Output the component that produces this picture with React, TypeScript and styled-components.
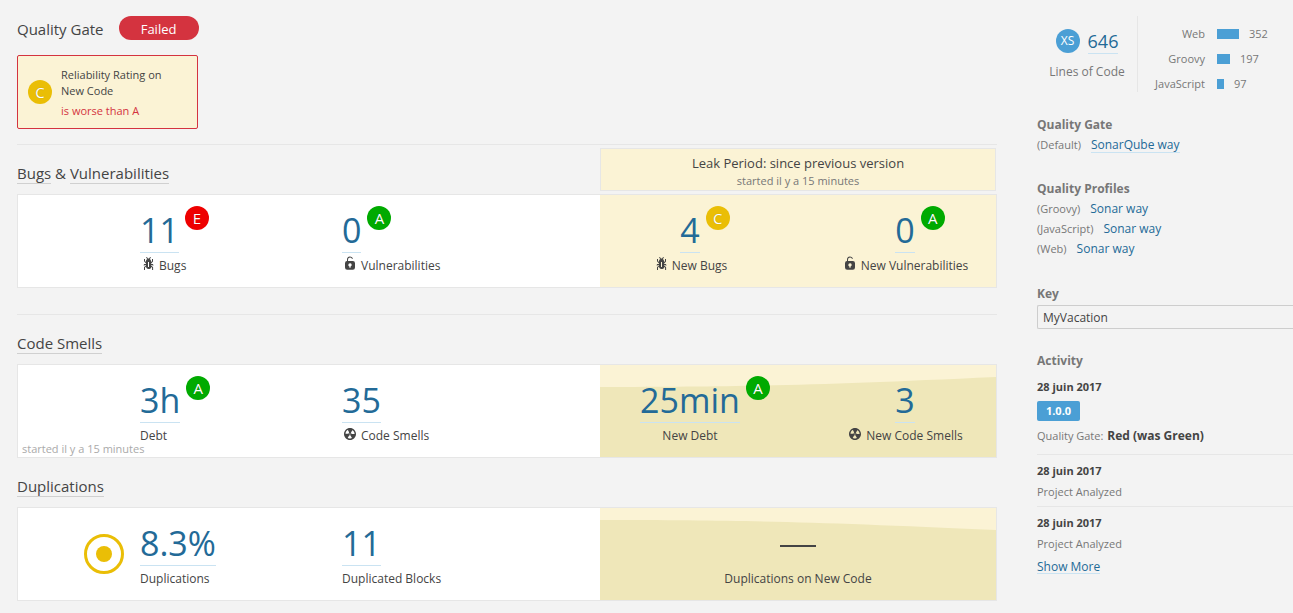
import React from 'react';
import styled, { createGlobalStyle } from 'styled-components';

const ink = '#444';
const muted = '#777';
const linkBlue = '#236a97';
const linkLine = '#cae3f2';
const line = '#e6e6e6';
const leak = '#fbf3d5';
const leakDeep = '#efe7b9';
const brand = '#4b9fd5';
const red = '#d4333f';

const ratingColors = { A: '#00aa00', C: '#eabe06', E: '#ee0000' };
type Rating = keyof typeof ratingColors;

const GlobalStyle = createGlobalStyle`
  *, *::before, *::after { box-sizing: border-box; }
  body {
    margin: 0;
    background: #f3f3f3;
    color: ${ink};
    font-family: "Open Sans", "Noto Sans", sans-serif;
    font-size: 12px;
    line-height: 20px;
  }
  h2, h3, p, ul, dl, dd { margin: 0; padding: 0; }
  ul { list-style: none; }
`;

const Page = styled.div`
  display: grid;
  grid-template-columns: minmax(0, 1fr) 256px;
  column-gap: 40px;
  padding: 16px 0 12px 17px;
`;

const Main = styled.main`
  display: flex;
  flex-direction: column;
`;

const Title = styled.h2`
  font-size: 15px;
  font-weight: 400;
  line-height: 20px;
`;

const GateHeader = styled.header`
  display: flex;
  align-items: center;
  gap: 15px;
  height: 24px;
  & > ${Title} { padding-top: 2px; }
`;

const TitleLink = styled.a`
  display: inline-block;
  color: ${ink};
  text-decoration: none;
  border-bottom: 1px solid #d0d0d0;
`;

const FailedPill = styled.strong`
  width: 80px;
  height: 24px;
  border-radius: 12px;
  background: ${red};
  color: #fff;
  font-size: 13px;
  font-weight: 400;
  line-height: 26px;
  text-align: center;
`;

const Condition = styled.a`
  display: flex;
  align-items: center;
  gap: 9px;
  width: 181px;
  height: 74px;
  margin-top: 15px;
  padding: 0 10px;
  border: 1px solid ${red};
  border-radius: 2px;
  background: ${leak};
  color: ${ink};
  font-size: 11px;
  line-height: 16px;
  text-decoration: none;
`;

const ConditionText = styled.span`
  padding-top: 2px;
`;

const Threshold = styled.span`
  display: block;
  margin-top: 4px;
  color: ${red};
`;

const RatingBadge = styled.span<{ $rating: Rating }>`
  display: inline-block;
  flex: none;
  width: 24px;
  height: 24px;
  border-radius: 50%;
  background: ${(p) => ratingColors[p.$rating]};
  color: #fff;
  font-size: 15px;
  line-height: 24px;
  text-align: center;
  text-shadow: 0 0 1px rgba(0, 0, 0, 0.3);
`;

const Domain = styled.section<{ $ruled?: boolean; $top: number }>`
  margin-top: ${(p) => p.$top}px;
  border-top: ${(p) => (p.$ruled ? `1px solid ${line}` : '0')};
`;

const DomainHeader = styled.header<{ $top?: number }>`
  padding: ${(p) => p.$top ?? 0}px 0 10px;
`;

const BugsHeader = styled.header`
  display: flex;
  justify-content: space-between;
  align-items: flex-end;
  padding: 3px 0;
  & > ${Title} { margin-bottom: 7px; }
`;

const LeakLegend = styled.div`
  width: 396px;
  height: 43px;
  margin-right: 1px;
  padding-top: 5px;
  border: 1px solid ${line};
  background: ${leak};
  line-height: 18px;
  text-align: center;
  & > p { font-size: 13px; }
  & > small { display: block; color: ${muted}; font-size: 11px; }
`;

const Panel = styled.div`
  position: relative;
  display: flex;
  height: 94px;
  border: 1px solid ${line};
  background: #fff;
`;

const Measures = styled.div`
  display: grid;
  flex: 1;
  grid-template-columns: 122px 202px 1fr;
`;

const LeakMeasures = styled.div<{ $single?: boolean }>`
  position: relative;
  display: grid;
  width: 396px;
  grid-template-columns: ${(p) => (p.$single ? '1fr' : '180px 170px')};
  column-gap: 40px;
  background: ${leak};
`;

const Wave = styled.svg`
  position: absolute;
  inset: 0;
  width: 100%;
  height: 100%;
`;

const MeasureBox = styled.div<{ $centered?: boolean }>`
  position: relative;
  display: flex;
  flex-direction: column;
  align-items: ${(p) => (p.$centered ? 'center' : 'flex-start')};
  padding-top: 17px;
`;

const ValueWrap = styled.div`
  position: relative;
  & > ${RatingBadge} {
    position: absolute;
    top: -6px;
    left: calc(100% + 6px);
  }
`;

const Value = styled.a`
  display: block;
  height: 41px;
  border-bottom: 1px solid ${linkLine};
  color: ${linkBlue};
  font-size: 34px;
  font-weight: 400;
  line-height: 36px;
  text-decoration: none;
`;

const NoValue = styled.span`
  width: 36px;
  height: 2px;
  margin: 20px 0 19px;
  background: ${ink};
`;

const Label = styled.span`
  display: flex;
  align-items: center;
  gap: 3px;
  margin-top: 3px;
  line-height: 20px;
  & > svg { margin-bottom: 4px; }
`;

const RingCell = styled.div`
  display: flex;
  align-items: center;
  justify-content: flex-end;
  padding-right: 16px;
`;

const TimelineNote = styled.small`
  position: absolute;
  bottom: 0;
  left: 4px;
  color: #aaa;
  font-size: 11px;
  line-height: 16px;
`;

const Sidebar = styled.aside`
  display: flex;
  flex-direction: column;
  min-width: 0;
  color: ${muted};
`;

const SizeCard = styled.div`
  display: flex;
  height: 76px;
`;

const Ncloc = styled.div`
  width: 101px;
  padding-top: 13px;
  border-right: 1px solid ${line};
  text-align: center;
`;

const NclocValue = styled.div`
  display: flex;
  justify-content: center;
  gap: 8px;
  margin-bottom: 8px;
  & > a {
    height: 25px;
    border-bottom: 1px solid ${linkLine};
    color: ${linkBlue};
    font-size: 18px;
    line-height: 25px;
    text-decoration: none;
  }
`;

const SizeBadge = styled.span`
  width: 24px;
  height: 24px;
  border-radius: 50%;
  background: ${brand};
  color: #fff;
  font-size: 12px;
  line-height: 24px;
`;

const Languages = styled.dl`
  display: grid;
  grid-template-columns: 67px 1fr;
  grid-auto-rows: 25px;
  align-items: center;
  column-gap: 12px;
  padding-top: 5px;
  font-size: 11px;
  & > dt { text-align: right; }
  & > dd { display: flex; align-items: center; gap: 10px; }
`;

const Bar = styled.span`
  height: 10px;
  background: ${brand};
`;

const Meta = styled.section<{ $top: number }>`
  margin-top: ${(p) => p.$top}px;
`;

const MetaTitle = styled.h3`
  font-size: 12px;
  font-weight: 700;
  line-height: 20px;
`;

const MetaRow = styled.li`
  display: flex;
  gap: 10px;
  font-size: 11px;
  line-height: 20px;
`;

const MetaLink = styled.a<{ $underlined?: boolean }>`
  height: 18px;
  border-bottom: ${(p) => (p.$underlined ? `1px solid ${linkLine}` : '0')};
  color: ${linkBlue};
  font-size: 12px;
  line-height: 20px;
  text-decoration: none;
`;

const KeyInput = styled.input`
  display: block;
  width: 100%;
  height: 24px;
  margin-top: 1px;
  padding: 0 5px;
  border: 1px solid #cdcdcd;
  border-right: 0;
  border-radius: 2px 0 0 2px;
  background: transparent;
  color: ${ink};
  font-family: inherit;
  font-size: 12px;
`;

const Event = styled.li`
  padding: 6px 0 4px;
  font-size: 11px;
  line-height: 20px;
  &:first-child { padding-bottom: 8px; }
  & + & { border-top: 1px solid ${line}; }
  & > time { display: block; color: ${ink}; font-weight: 700; }
  & > p { margin-top: 1px; }
  & > p > b { margin-left: 1px; color: ${ink}; font-size: 12px; }
`;

const VersionTag = styled.span`
  display: block;
  width: 43px;
  margin: 4px 0 5px;
  border-radius: 2px;
  background: ${brand};
  color: #fff;
  font-weight: 700;
  text-align: center;
`;

const ShowMore = styled.a`
  align-self: flex-start;
  height: 16px;
  border-bottom: 1px solid ${linkLine};
  color: ${linkBlue};
  font-size: 12px;
  line-height: 18px;
  text-decoration: none;
`;

const iconPaths = {
  bug: 'M11 9h1.3l.5.8.8-.5-.8-1.3H11v-.3l2-2.3V3h-1v2l-1 1.2V5c-.1-.8-.7-1.5-1.4-1.9L11 1.8l-.7-.7-1.8 1.6-1.8-1.6-.7.7 1.5 1.3C6.7 3.5 6.1 4.2 6 5v1.1L5 5V3H4v2.3l2 2.3V8H4.2l-.7 1.2.8.5.4-.7H6v.3l-2 1.9V14h1v-2.4l1-1C6 12 7.1 13 8.4 13h.8c.7 0 1.4-.3 1.8-.9.3-.4.3-.9.2-1.4l.9.9V14h1v-2.8l-2-1.9V9zm-2 2H8V6h1v5z',
  lock: 'M10.8 5H6V3.9a2.28 2.28 0 0 1 2-2.5 2.22 2.22 0 0 1 1.8 1.2.48.48 0 0 0 .7.2.48.48 0 0 0 .2-.7A3 3 0 0 0 8 .4a3.34 3.34 0 0 0-3 3.5v1.2a2.16 2.16 0 0 0-2 2.1v4.4a2.22 2.22 0 0 0 2.2 2.2h5.6a2.22 2.22 0 0 0 2.2-2.2V7.2A2.22 2.22 0 0 0 10.8 5zm-2.2 5.5v1.2H7.4v-1.2a1.66 1.66 0 0 1-1.1-1.6A1.75 1.75 0 0 1 8 7.2a1.71 1.71 0 0 1 .6 3.3z',
  smell:
    'M8 2C4.7 2 2 4.7 2 8s2.7 6 6 6 6-2.7 6-6-2.7-6-6-6zm-.5 5.5h.9v.9h-.9v-.9zm-3.8.2c-.1 0-.2-.1-.2-.2 0-.4.1-1.2.6-2S5.3 4.2 5.6 4c.2 0 .3 0 .3.1l1.3 2.3c0 .1 0 .2-.1.2-.1.2-.2.3-.3.5-.1.2-.2.4-.2.5 0 .1-.1.2-.2.2l-2.7-.1zM9.9 12c-.3.2-1.1.5-2 .5-.9 0-1.7-.3-2-.5-.1 0-.1-.2-.1-.3l1.3-2.3c0-.1.1-.1.2-.1.2.1.3.1.5.1s.4 0 .5-.1c.1 0 .2 0 .2.1l1.3 2.3c.2.2.2.3.1.3zm2.5-4.1L9.7 8c-.1 0-.2-.1-.2-.2 0-.2-.1-.4-.2-.5 0-.1-.2-.3-.3-.4-.1 0-.1-.1-.1-.2l1.3-2.3c.1-.1.2-.1.3-.1.3.2 1 .7 1.5 1.5s.6 1.6.6 2c0 0-.1.1-.2.1z',
};

function Icon({ name }: { name: keyof typeof iconPaths }) {
  return (
    <svg width="16" height="16" viewBox="0 0 16 16" fill={ink} aria-hidden="true">
      <path d={iconPaths[name]} />
    </svg>
  );
}

type MeasureProps = {
  value?: string;
  label: string;
  icon?: keyof typeof iconPaths;
  rating?: Rating;
  centered?: boolean;
};

function Measure({ value, label, icon, rating, centered }: MeasureProps) {
  return (
    <MeasureBox $centered={centered}>
      {value ? (
        <ValueWrap>
          <Value href="#">{value}</Value>
          {rating && <RatingBadge $rating={rating}>{rating}</RatingBadge>}
        </ValueWrap>
      ) : (
        <NoValue />
      )}
      <Label>
        {icon && <Icon name={icon} />}
        {label}
      </Label>
    </MeasureBox>
  );
}

function LeakWave({ d }: { d: string }) {
  return (
    <Wave viewBox="0 0 396 92" preserveAspectRatio="none" aria-hidden="true">
      <path d={d} fill={leakDeep} />
    </Wave>
  );
}

const languages = [
  { name: 'Web', lines: 352 },
  { name: 'Groovy', lines: 197 },
  { name: 'JavaScript', lines: 97 },
];

const barWidth = (lines: number) => Math.round(2 + lines / 18);

const profiles = ['Groovy', 'JavaScript', 'Web'];

export default function App() {
  return (
    <>
      <GlobalStyle />
      <Page>
        <Main>
          <GateHeader>
            <Title>Quality Gate</Title>
            <FailedPill>Failed</FailedPill>
          </GateHeader>
          <Condition href="#">
            <RatingBadge $rating="C">C</RatingBadge>
            <ConditionText>
              Reliability Rating on New Code
              <Threshold>is worse than A</Threshold>
            </ConditionText>
          </Condition>

          <Domain $ruled $top={15}>
            <BugsHeader>
              <Title>
                <TitleLink href="#">Bugs</TitleLink> &amp; <TitleLink href="#">Vulnerabilities</TitleLink>
              </Title>
              <LeakLegend>
                <p>Leak Period: since previous version</p>
                <small>started il y a 15 minutes</small>
              </LeakLegend>
            </BugsHeader>
            <Panel>
              <Measures>
                <span />
                <Measure value="11" label="Bugs" icon="bug" rating="E" />
                <Measure value="0" label="Vulnerabilities" icon="lock" rating="A" />
              </Measures>
              <LeakMeasures>
                <Measure value="4" label="New Bugs" icon="bug" rating="C" centered />
                <Measure value="0" label="New Vulnerabilities" icon="lock" rating="A" centered />
              </LeakMeasures>
            </Panel>
          </Domain>

          <Domain $ruled $top={26}>
            <DomainHeader $top={18}>
              <Title>
                <TitleLink href="#">Code Smells</TitleLink>
              </Title>
            </DomainHeader>
            <Panel>
              <Measures>
                <span />
                <Measure value="3h" label="Debt" rating="A" />
                <Measure value="35" label="Code Smells" icon="smell" />
              </Measures>
              <LeakMeasures>
                <LeakWave d="M0 22C150 22 220 20 396 12V92H0Z" />
                <Measure value="25min" label="New Debt" rating="A" centered />
                <Measure value="3" label="New Code Smells" icon="smell" centered />
              </LeakMeasures>
              <TimelineNote>started il y a 15 minutes</TimelineNote>
            </Panel>
          </Domain>

          <Domain $top={18}>
            <DomainHeader>
              <Title>
                <TitleLink href="#">Duplications</TitleLink>
              </Title>
            </DomainHeader>
            <Panel>
              <Measures>
                <RingCell>
                  <svg width="40" height="40" viewBox="0 0 40 40" aria-hidden="true">
                    <circle cx="20" cy="20" r="18.5" fill="none" stroke="#eabe06" strokeWidth="3" />
                    <circle cx="20" cy="20" r="8" fill="#eabe06" />
                  </svg>
                </RingCell>
                <Measure value="8.3%" label="Duplications" />
                <Measure value="11" label="Duplicated Blocks" />
              </Measures>
              <LeakMeasures $single>
                <LeakWave d="M0 12C150 12 220 14 396 22V92H0Z" />
                <Measure label="Duplications on New Code" centered />
              </LeakMeasures>
            </Panel>
          </Domain>
        </Main>

        <Sidebar>
          <SizeCard>
            <Ncloc>
              <NclocValue>
                <SizeBadge>XS</SizeBadge>
                <a href="#">646</a>
              </NclocValue>
              Lines of Code
            </Ncloc>
            <Languages>
              {languages.map(({ name, lines }) => (
                <React.Fragment key={name}>
                  <dt>{name}</dt>
                  <dd>
                    <Bar style={{ width: barWidth(lines) }} />
                    {lines}
                  </dd>
                </React.Fragment>
              ))}
            </Languages>
          </SizeCard>

          <Meta $top={23}>
            <MetaTitle>Quality Gate</MetaTitle>
            <ul>
              <MetaRow>
                (Default)
                <MetaLink href="#" $underlined>
                  SonarQube way
                </MetaLink>
              </MetaRow>
            </ul>
          </Meta>

          <Meta $top={24}>
            <MetaTitle>Quality Profiles</MetaTitle>
            <ul>
              {profiles.map((name) => (
                <MetaRow key={name}>
                  ({name})<MetaLink href="#">Sonar way</MetaLink>
                </MetaRow>
              ))}
            </ul>
          </Meta>

          <Meta $top={25}>
            <MetaTitle>
              <label htmlFor="project-key">Key</label>
            </MetaTitle>
            <KeyInput id="project-key" readOnly defaultValue="MyVacation" />
          </Meta>

          <Meta $top={22}>
            <MetaTitle>Activity</MetaTitle>
            <ul>
              <Event>
                <time dateTime="2017-06-28">28 juin 2017</time>
                <VersionTag>1.0.0</VersionTag>
                <p>
                  Quality Gate: <b>Red (was Green)</b>
                </p>
              </Event>
              <Event>
                <time dateTime="2017-06-28">28 juin 2017</time>
                <p>Project Analyzed</p>
              </Event>
              <Event>
                <time dateTime="2017-06-28">28 juin 2017</time>
                <p>Project Analyzed</p>
              </Event>
            </ul>
          </Meta>
          <ShowMore href="#">Show More</ShowMore>
        </Sidebar>
      </Page>
    </>
  );
}
